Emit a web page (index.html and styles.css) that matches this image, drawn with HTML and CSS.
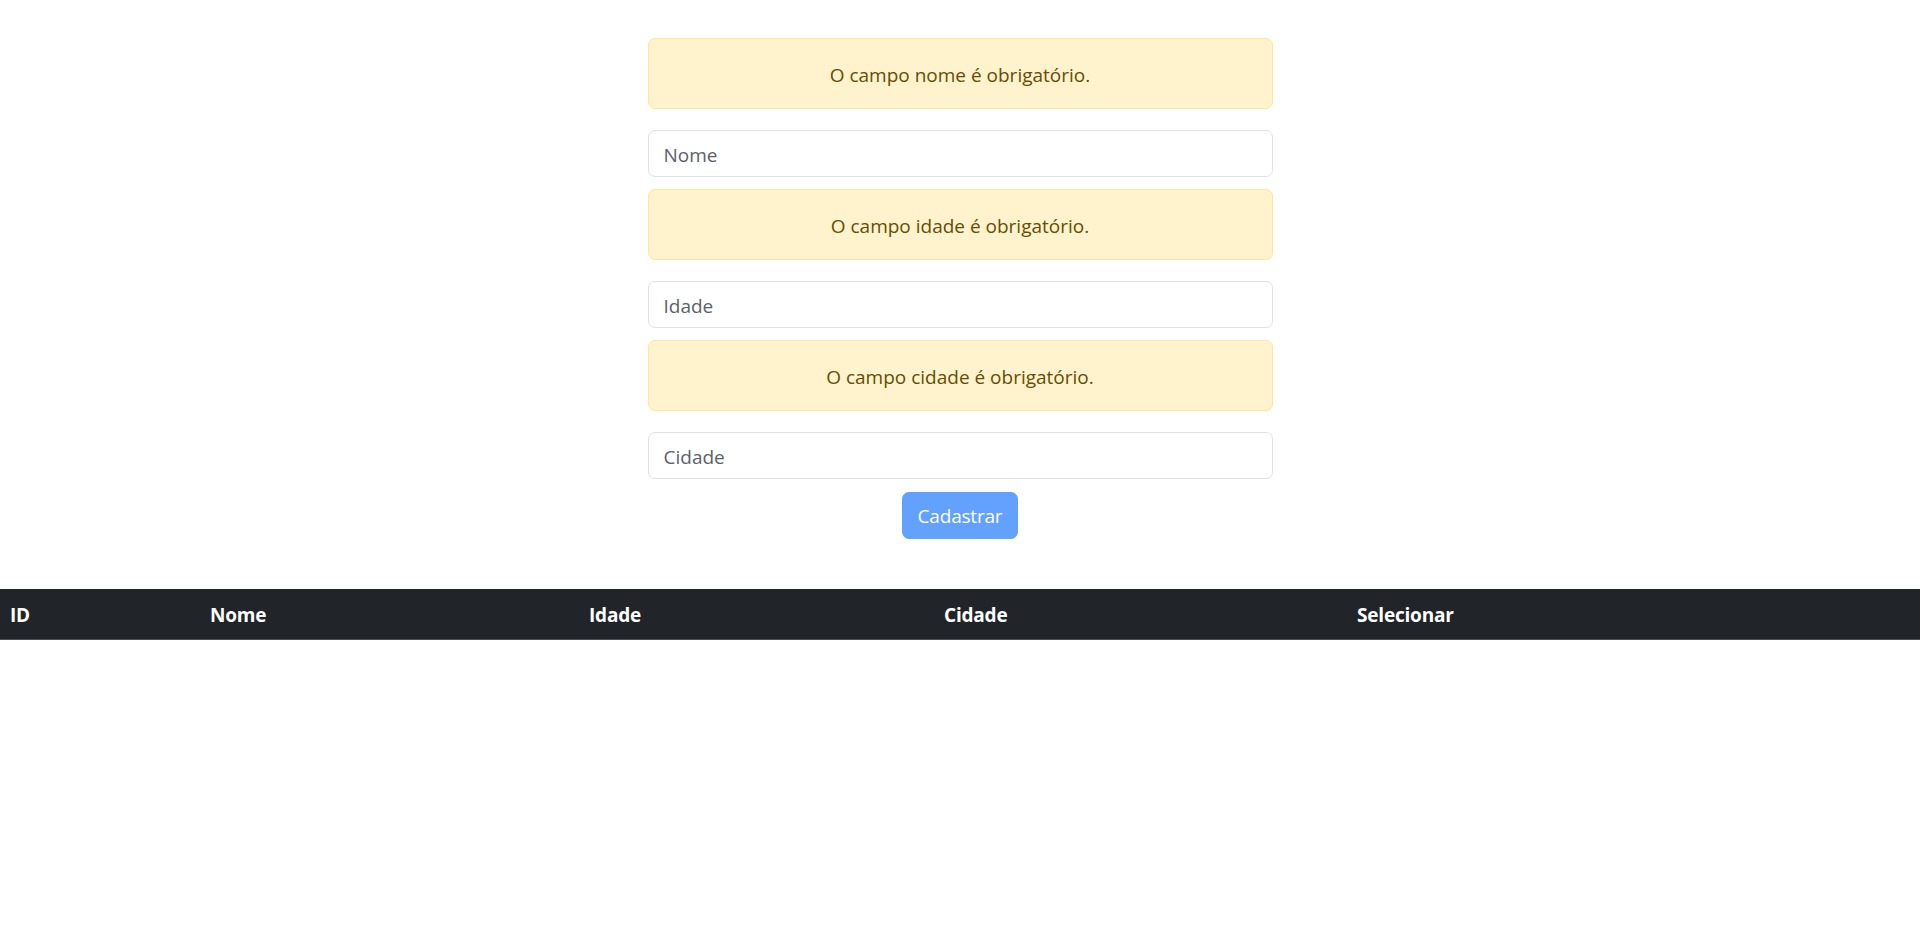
FILE: index.html
```html
<!DOCTYPE html>
<html lang="pt">
<head>
<meta charset="utf-8">
<title>Cadastro</title>
<link rel="stylesheet" href="styles.css">
</head>
<body>
<main class="page">
  <form class="form">
    <div class="alert">O campo nome é obrigatório.</div>
    <input class="field" type="text" placeholder="Nome">
    <div class="alert">O campo idade é obrigatório.</div>
    <input class="field" type="text" placeholder="Idade">
    <div class="alert">O campo cidade é obrigatório.</div>
    <input class="field" type="text" placeholder="Cidade">
    <div class="actions">
      <button class="btn" type="button" disabled>Cadastrar</button>
    </div>
  </form>
  <table class="table">
    <thead>
      <tr>
        <th class="col-id">ID</th>
        <th class="col-nome">Nome</th>
        <th class="col-idade">Idade</th>
        <th class="col-cidade">Cidade</th>
        <th>Selecionar</th>
      </tr>
    </thead>
    <tbody></tbody>
  </table>
</main>
</body>
</html>
```

FILE: styles.css
```css
* { box-sizing: border-box; }
html, body { margin: 0; padding: 0; background: #fff; }
body {
  font-family: "Open Sans", "Noto Sans", "Liberation Sans", sans-serif;
  font-size: 19px;
  line-height: 1.5;
  color: #212529;
}
.page { padding-top: 38px; }
.form {
  width: 625px;
  margin: 0 auto;
  display: flex;
  flex-direction: column;
}
.alert {
  background: #fff3cd;
  border: 1px solid #ffe69c;
  color: #664d03;
  border-radius: 7px;
  padding: 22px 20px 18px;
  text-align: center;
  height: 71px;
  line-height: 29px;
  margin-bottom: 21px;
}
.field {
  display: block;
  width: 100%;
  height: 47px;
  padding: 8px 15px 6px;
  font: inherit;
  color: #212529;
  border: 1px solid #dee2e6;
  border-radius: 7px;
  margin-bottom: 12px;
  background: #fff;
}
.field::placeholder { color: #5d6168; opacity: 1; }
.actions {
  display: flex;
  justify-content: center;
  margin-top: 1px;
}
.btn {
  font: inherit;
  color: #fff;
  background: #62a1fe;
  border: 1px solid #62a1fe;
  border-radius: 7px;
  width: 116px;
  height: 47px;
  padding: 2px 0 0;
  letter-spacing: -0.2px;
}
.table {
  width: 100%;
  margin-top: 50px;
  border-collapse: collapse;
  table-layout: fixed;
}
.table th {
  background: #212529;
  color: #fff;
  font-weight: 700;
  font-size: 19px;
  letter-spacing: -0.2px;
  text-align: left;
  padding: 11px 10px 9px;
  height: 50px;
  line-height: 30px;
  border-bottom: 1px solid #4d5154;
}
.col-id { width: 200px; }
.col-nome { width: 379px; }
.col-idade { width: 355px; }
.col-cidade { width: 413px; }
```
